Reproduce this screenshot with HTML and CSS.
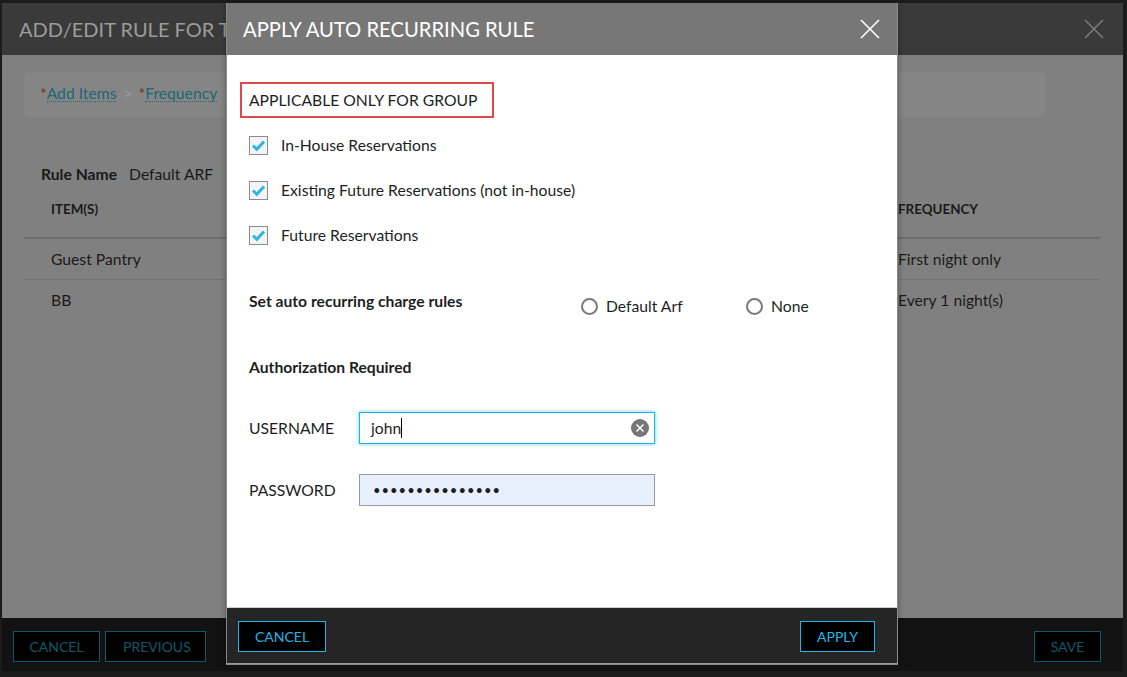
FILE: index.html
```html
<!DOCTYPE html>
<html lang="en">
<head>
<meta charset="utf-8">
<title>Apply Auto Recurring Rule</title>
<link rel="stylesheet" href="styles.css">
</head>
<body>
<div class="page">
  <div class="bg-modal">
    <div class="bg-header">
      <div class="bg-title">ADD/EDIT RULE FOR THE GROUP</div>
      <svg class="x-icon" width="20" height="20" viewBox="0 0 20 20"><path d="M1 1 L19 19 M19 1 L1 19" stroke="#7a7a7a" stroke-width="1.6" fill="none"/></svg>
    </div>
    <div class="bg-body">
      <div class="crumbs">
        <span class="req">*</span><span class="crumb">Add Items</span>
        <span class="sep">&gt;</span>
        <span class="req">*</span><span class="crumb">Frequency</span>
        <span class="sep">&gt;</span>
      </div>
      <div class="rule-name"><b>Rule Name</b><span>Default ARF</span></div>
      <div class="table">
        <div class="th">ITEM(S)</div><div class="th">FREQUENCY</div>
        <div class="td">Guest Pantry</div><div class="td">First night only</div>
        <div class="td">BB</div><div class="td">Every 1 night(s)</div>
      </div>
    </div>
    <div class="bg-footer">
      <div class="btn-group">
        <button class="btn dim">CANCEL</button>
        <button class="btn dim wide">PREVIOUS</button>
      </div>
      <button class="btn dim">SAVE</button>
    </div>
  </div>

  <div class="modal">
    <div class="m-header">
      <div class="m-title">APPLY AUTO RECURRING RULE</div>
      <svg class="x-icon" width="20" height="20" viewBox="0 0 20 20"><path d="M1 1 L19 19 M19 1 L1 19" stroke="#ffffff" stroke-width="1.6" fill="none"/></svg>
    </div>
    <div class="m-body">
      <div class="group-box">APPLICABLE ONLY FOR GROUP</div>
      <div class="checks">
        <div class="check-row"><span class="cb"><svg width="17" height="17" viewBox="0 0 17 17"><path d="M3 8.5 L6.8 12.3 L14 4.5" stroke="#2cb6e4" stroke-width="3" fill="none"/></svg></span><span>In-House Reservations</span></div>
        <div class="check-row"><span class="cb"><svg width="17" height="17" viewBox="0 0 17 17"><path d="M3 8.5 L6.8 12.3 L14 4.5" stroke="#2cb6e4" stroke-width="3" fill="none"/></svg></span><span>Existing Future Reservations (not in-house)</span></div>
        <div class="check-row"><span class="cb"><svg width="17" height="17" viewBox="0 0 17 17"><path d="M3 8.5 L6.8 12.3 L14 4.5" stroke="#2cb6e4" stroke-width="3" fill="none"/></svg></span><span>Future Reservations</span></div>
      </div>
      <div class="rules-row">
        <div class="bold-label rules-label">Set auto recurring charge rules</div>
        <div class="radios">
          <div class="radio-opt"><span class="radio"></span><span>Default Arf</span></div>
          <div class="radio-opt"><span class="radio"></span><span>None</span></div>
        </div>
      </div>
      <div class="bold-label auth">Authorization Required</div>
      <div class="field-row user-row">
        <div class="f-label">USERNAME</div>
        <div class="field focused"><span>john</span><span class="caret"></span>
          <span class="clear"><svg width="18" height="18" viewBox="0 0 18 18"><circle cx="9" cy="9" r="9" fill="#777"/><path d="M5.5 5.5 L12.5 12.5 M12.5 5.5 L5.5 12.5" stroke="#fff" stroke-width="1.5"/></svg></span>
        </div>
      </div>
      <div class="field-row pass-row">
        <div class="f-label">PASSWORD</div>
        <div class="field filled"><span class="dots">•••••••••••••••</span></div>
      </div>
    </div>
    <div class="m-footer">
      <button class="btn">CANCEL</button>
      <button class="btn apply">APPLY</button>
    </div>
  </div>
</div>
</body>
</html>
```
FILE: styles.css
```css
* { box-sizing: border-box; }
html, body { margin: 0; padding: 0; }
body {
  background: #1c1c1c;
  font-family: Lato, "Open Sans", sans-serif;
  width: 1127px;
  height: 677px;
  overflow: hidden;
}
.page {
  position: relative;
  width: 1127px;
  height: 677px;
  padding: 3px 4px 0 2px;
}

/* background (dimmed) modal */
.bg-modal {
  width: 1121px;
  height: 668px;
  display: flex;
  flex-direction: column;
  background: #808080;
}
.bg-header {
  height: 52px;
  flex: none;
  background: #3a3a3a;
  display: flex;
  align-items: center;
  justify-content: space-between;
  padding: 0 19px 0 17px;
}
.bg-title {
  color: #9c9c9c;
  font-size: 20px;
  white-space: nowrap;
  width: 207px;
  overflow: hidden;
}
.bg-body {
  flex: 1;
  padding: 17px 21px 0 22px;
  color: #1a1a1a;
  font-size: 15.7px;
}
.crumbs {
  width: 1022px;
  height: 45px;
  background: #858585;
  border-radius: 6px;
  display: flex;
  align-items: center;
  padding-left: 16px;
  padding-bottom: 3px;
}
.req { color: #7a2a2a; }
.crumb {
  color: #1d6777;
  border-bottom: 1px dotted #1d6777;
  line-height: 16px;
}
.sep { color: #9a9a9a; margin: 0 6px 0 7px; }
.rule-name {
  margin-top: 47px;
  line-height: 20px;
  padding-left: 17px;
  display: flex;
  gap: 12px;
}
.rule-name b { font-weight: 700; }
.table {
  display: grid;
  grid-template-columns: 874px 1fr;
  width: 1076px;
}
.th {
  font-size: 13.4px;
  font-weight: 700;
  line-height: 18px;
  padding: 16px 0 19px 0;
  border-bottom: 2px solid #6c6c6c;
}
.td {
  line-height: 40px;
  border-bottom: 1px solid #727272;
}
.table > div:nth-child(odd) { padding-left: 27px; }
.table > .td:nth-last-child(-n+2) { border-bottom: none; }

.bg-footer {
  height: 53px;
  flex: none;
  background: #121212;
  display: flex;
  justify-content: space-between;
  align-items: flex-start;
  padding: 13px 22px 0 11px;
}
.btn-group { display: flex; gap: 5px; }

.btn {
  font-family: Lato, "Open Sans", sans-serif;
  font-size: 14px;
  background: #000;
  color: #1fb6e6;
  border: 1px solid #1fb6e6;
  height: 31px;
  padding: 0 17px;
  cursor: pointer;
}
.btn.dim {
  color: #0f5868;
  border-color: #0f5868;
}
.btn.wide { width: 101px; }
.bg-footer .btn:first-child { width: 87px; padding: 0; }
.bg-footer > .btn { width: 67px; padding: 0; }

/* foreground modal */
.modal {
  position: absolute;
  left: 226px;
  top: 3px;
  width: 672px;
  height: 662px;
  border: 1px solid #8a8a8a;
  border-top: none;
  display: flex;
  flex-direction: column;
  background: #fff;
  box-shadow: 0 0 6px rgba(0,0,0,0.35);
}
.m-header {
  height: 52px;
  flex: none;
  background: #777777;
  display: flex;
  align-items: center;
  justify-content: space-between;
  padding: 0 17px 0 16px;
}
.m-title {
  color: #fff;
  font-size: 20.2px;
}
.m-body {
  flex: 1;
  padding: 27px 0 0 13px;
  color: #1e1e1e;
  font-size: 15.7px;
}
.group-box {
  width: 254px;
  height: 36px;
  border: 2px solid #e04848;
  padding-left: 7px;
  display: flex;
  align-items: center;
}
.checks {
  margin-top: 12px;
  padding-left: 9px;
  display: flex;
  flex-direction: column;
  gap: 15px;
}
.check-row {
  height: 30px;
  display: flex;
  align-items: center;
  gap: 13px;
}
.cb {
  width: 19px;
  height: 19px;
  flex: none;
  border: 1px solid #8c8c8c;
  background: #f4f4f4;
  display: flex;
  align-items: center;
  justify-content: center;
}
.cb svg { display: block; }
.rules-row {
  margin-top: 41px;
  padding-left: 9px;
  display: flex;
}
.bold-label {
  font-weight: 700;
  line-height: 20px;
}
.rules-label { width: 332px; flex: none; }
.radios {
  display: flex;
  padding-top: 5px;
}
.radio-opt {
  width: 165px;
  flex: none;
  display: flex;
  align-items: center;
  gap: 8px;
  line-height: 20px;
}
.radio {
  width: 17px;
  height: 17px;
  flex: none;
  border: 2px solid #7a7a7a;
  border-radius: 50%;
  background: #fff;
}
.auth {
  margin-top: 41px;
  padding-left: 9px;
}
.field-row {
  padding-left: 9px;
  display: flex;
  align-items: center;
}
.user-row { margin-top: 35px; }
.pass-row { margin-top: 30px; }
.f-label { width: 110px; flex: none; }
.field {
  position: relative;
  width: 296px;
  height: 32px;
  border: 1px solid #9a9a9a;
  display: flex;
  align-items: center;
  padding-left: 11px;
}
.field.focused {
  border-color: #1fb6e6;
  box-shadow: 0 0 4px rgba(31,182,230,0.7);
}
.caret {
  width: 1px;
  height: 20px;
  background: #000;
}
.clear {
  position: absolute;
  right: 5px;
  top: 6px;
  width: 18px;
  height: 18px;
}
.clear svg { display: block; }
.field.filled { background: #e8f0fe; padding-left: 13px; }
.dots { font-size: 13px; letter-spacing: 1px; }

.m-footer {
  height: 57px;
  flex: none;
  background: #252525;
  border-top: 1px solid #cfcfcf;
  border-bottom: 1px solid #9a9a9a;
  display: flex;
  justify-content: space-between;
  align-items: flex-start;
  padding: 13px 22px 0 11px;
}
.m-footer .btn { height: 31px; width: 88px; padding: 0; }
.m-footer .btn.apply { width: 75px; }
```
